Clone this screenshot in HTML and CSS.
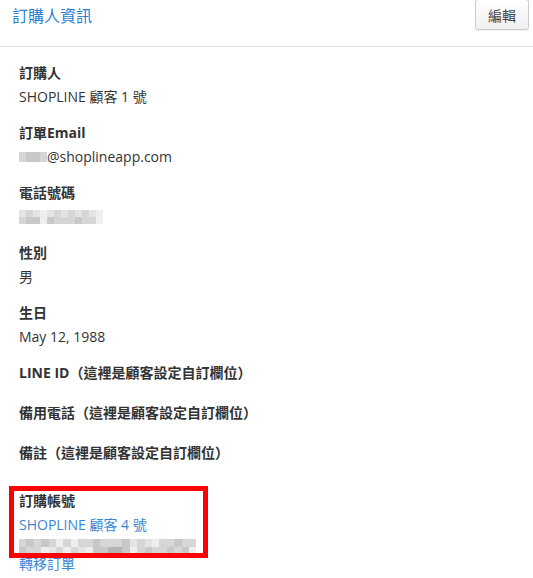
FILE: index.html
```html
<!DOCTYPE html>
<html lang="zh-TW">
<head>
    <meta charset="UTF-8">
    <meta name="viewport" content="width=device-width, initial-scale=1.0">
    <title>訂購人資訊</title>
    <link rel="stylesheet" href="styles.css">
</head>
<body>
    <div class="panel">
        <div class="panel-heading">
            <h3 class="panel-title">訂購人資訊</h3>
            <button class="btn-edit">編輯</button>
        </div>

        <div class="panel-body">
            <div class="field">
                <div class="field-label">訂購人</div>
                <div class="field-value">SHOPLINE 顧客 1 號</div>
            </div>

            <div class="field">
                <div class="field-label">訂單Email</div>
                <div class="field-value">
                    <span class="mosaic mosaic-email">
                        <i class="p2"></i><i class="p3"></i><i class="p3"></i><i class="p2"></i>
                        <i class="p2"></i><i class="p3"></i><i class="p3"></i><i class="p2"></i>
                    </span>@shoplineapp.com
                </div>
            </div>

            <div class="field">
                <div class="field-label">電話號碼</div>
                <div class="field-value">
                    <span class="mosaic mosaic-phone">
                        <i class="p1"></i><i class="p2"></i><i class="p1"></i><i class="p4"></i><i class="p1"></i><i class="p2"></i><i class="p1"></i><i class="p2"></i><i class="p1"></i><i class="p2"></i><i class="p1"></i><i class="p4"></i>
                        <i class="p2"></i><i class="p3"></i><i class="p3"></i><i class="p4"></i><i class="p3"></i><i class="p2"></i><i class="p2"></i><i class="p2"></i><i class="p3"></i><i class="p2"></i><i class="p2"></i><i class="p4"></i>
                    </span>
                </div>
            </div>

            <div class="field">
                <div class="field-label">性別</div>
                <div class="field-value">男</div>
            </div>

            <div class="field">
                <div class="field-label">生日</div>
                <div class="field-value">May 12, 1988</div>
            </div>

            <div class="field">
                <div class="field-label">LINE ID（這裡是顧客設定自訂欄位）</div>
                <div class="field-value"></div>
            </div>

            <div class="field">
                <div class="field-label">備用電話（這裡是顧客設定自訂欄位）</div>
                <div class="field-value"></div>
            </div>

            <div class="field">
                <div class="field-label">備註（這裡是顧客設定自訂欄位）</div>
                <div class="field-value"></div>
            </div>

            <div class="field field-account">
                <div class="field-label">訂購帳號</div>
                <div class="field-value"><a href="#" class="link">SHOPLINE 顧客 4 號</a></div>
                <div class="mosaic mosaic-account">
                    <i class="p2"></i><i class="p3"></i><i class="p2"></i><i class="p3"></i><i class="p2"></i><i class="p4"></i><i class="p2"></i><i class="p4"></i><i class="p2"></i><i class="p2"></i><i class="p3"></i><i class="p2"></i><i class="p2"></i><i class="p2"></i><i class="p3"></i><i class="p1"></i><i class="p2"></i><i class="p1"></i><i class="p4"></i><i class="p2"></i><i class="p2"></i><i class="p3"></i><i class="p2"></i><i class="p2"></i>
                    <i class="p3"></i><i class="p2"></i><i class="p2"></i><i class="p4"></i><i class="p1"></i><i class="p2"></i><i class="p4"></i><i class="p2"></i><i class="p1"></i><i class="p4"></i><i class="p3"></i><i class="p3"></i><i class="p5"></i><i class="p5"></i><i class="p3"></i><i class="p4"></i><i class="p2"></i><i class="p3"></i><i class="p2"></i><i class="p2"></i><i class="p3"></i><i class="p2"></i><i class="p3"></i><i class="p4"></i>
                </div>
                <a href="#" class="link">轉移訂單</a>
                <div class="highlight"></div>
            </div>
        </div>
    </div>
</body>
</html>
```

FILE: styles.css
```css
body {
    margin: 0;
    font-family: "Open Sans", "Noto Sans CJK TC", sans-serif;
    font-size: 14px;
    color: #333;
    background: #fff;
}
.panel-heading {
    display: flex;
    justify-content: space-between;
    align-items: flex-start;
    height: 46px;
    padding: 0 4px 0 12px;
    border-bottom: 1px solid #e3e3e3;
}
.panel-title {
    margin: 0;
    font-size: 16px;
    font-weight: normal;
    line-height: 33px;
    color: #2a7fd4;
}
.btn-edit {
    height: 31px;
    padding: 0 12px;
    margin-top: -1px;
    border: 1px solid #ccc;
    border-radius: 3px;
    background: linear-gradient(#fff, #efefef);
    box-shadow: 0 1px 1px rgba(0,0,0,0.06);
    font-family: inherit;
    font-size: 14px;
    color: #444;
}
.panel-body {
    padding: 16px 19px 0;
}
.field {
    padding-bottom: 16px;
}
.field-label {
    line-height: 20px;
    font-weight: bold;
    margin-bottom: 4px;
}
.field-value {
    line-height: 20px;
}
.field-account {
    position: relative;
    margin-top: 8px;
}
.link {
    display: block;
    line-height: 20px;
    color: #3a86d2;
    text-decoration: none;
}
.mosaic {
    display: inline-grid;
    vertical-align: middle;
}
.mosaic i {
    display: block;
}
.mosaic-email {
    grid-template-columns: repeat(4, 7px);
    grid-auto-rows: 5px;
    margin-top: -3px;
}
.mosaic-phone {
    grid-template-columns: repeat(12, 7px);
    grid-auto-rows: 7px;
    margin-top: -2px;
}
.mosaic-account {
    display: grid;
    grid-template-columns: repeat(24, 7.4px);
    grid-auto-rows: 7.5px;
    margin-top: 4px;
}
.p1 { background: #e4e4e4; }
.p2 { background: #d6d6d6; }
.p3 { background: #c8c8c8; }
.p4 { background: #efefef; }
.p5 { background: #b4b4b4; }
.highlight {
    position: absolute;
    left: -10px;
    top: -5px;
    width: 189px;
    height: 62px;
    border: 5px solid #f00;
}
```
